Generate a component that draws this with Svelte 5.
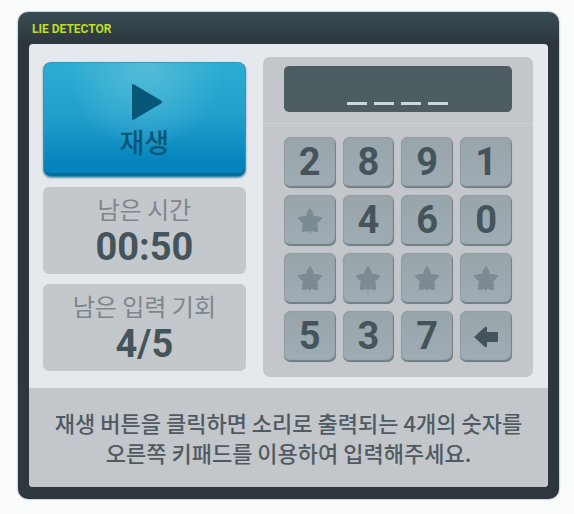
<script lang="ts">
	const CODE_LENGTH = 4;

	const keys = ['2', '8', '9', '1', '*', '4', '6', '0', '*', '*', '*', '*', '5', '3', '7', 'back'];

	let entered = $state<string[]>([]);

	const slots = $derived(Array.from({ length: CODE_LENGTH }, (_, i) => entered[i] ?? ''));

	const press = (key: string) => {
		if (key === 'back') {
			entered = entered.slice(0, -1);
			return;
		}

		if (entered.length < CODE_LENGTH) entered = [...entered, key];
	};
</script>

<main class="detector">
	<h1>LIE DETECTOR</h1>

	<div class="body">
		<div class="content">
			<div class="side">
				<button class="play" type="button">
					<svg viewBox="-6 0 38 38" width="38" height="38" aria-hidden="true">
						<path d="M1 2.6Q1 .3 3 1.5L30 17.4Q32 19 30 20.6L3 36.5Q1 37.700 1 35.4Z" />
					</svg>
					<span>재생</span>
				</button>

				<section class="info">
					<h2>남은 시간</h2>
					<p>00:50</p>
				</section>

				<section class="info">
					<h2>남은 입력 기회</h2>
					<p>4/5</p>
				</section>
			</div>

			<div class="pad">
				<div class="screen">
					<output aria-label="입력">
						{#each slots as digit}
							<span class="slot">{digit}</span>
						{/each}
					</output>
				</div>

				<div class="keys">
					{#each keys as key}
						{#if key === '*'}
							<button class="key" type="button" disabled aria-label="빈 버튼">
								<svg viewBox="0 0 26 26" width="26" height="26" aria-hidden="true">
									<path
										d="M13 0Q16 3 17 8Q21 7.500 25.500 9.500Q23 13.500 20 15.500Q21.500 19 21 24Q17 24 14 22.800L13.500 25H12.500L12 22.800Q9 24 5 24Q4.500 19 6 15.500Q3 13.500 .5 9.500Q5 7.500 9 8Q10 3 13 0Z"
									/>
								</svg>
							</button>
						{:else if key === 'back'}
							<button class="key" type="button" aria-label="지우기" onclick={() => press(key)}>
								<svg viewBox="0 0 26 24" width="26" height="24" aria-hidden="true">
									<path d="M1 12L12 2Q14 1 14 3V7H24Q25 7 25 8V16Q25 17 24 17H14V21Q14 23 12 22Z" />
								</svg>
							</button>
						{:else}
							<button class="key" type="button" onclick={() => press(key)}>{key}</button>
						{/if}
					{/each}
				</div>
			</div>
		</div>

		<p class="guide">
			재생 버튼을 클릭하면 소리로 출력되는 4개의 숫자를<br />
			오른쪽 키패드를 이용하여 입력해주세요.
		</p>
	</div>
</main>

<style>
	:global(body) {
		background: #fafcfc;
	}

	.detector {
		box-sizing: border-box;
		margin: 12px 15px 12px 18px;
		padding: 0 11px 12px;
		border-radius: 10px;
		background: linear-gradient(#384b53, #2d363d 32px, #2d373c);
		box-shadow: 0 0 2px #6d787c;
		color: #45545b;
		font-family: 'Noto Sans CJK KR', sans-serif;
	}

	h1,
	h2,
	p {
		margin: 0;
	}

	h1 {
		padding: 9px 3px 7px;
		color: #c1dc2b;
		font: 700 12px/16px Roboto, sans-serif;
	}

	.body {
		overflow: hidden;
		border-radius: 4px;
		background: #e5e8ec;
	}

	.content {
		display: grid;
		grid-template-columns: 3fr 4fr;
		gap: 17px;
		padding: 13px 15px 11px 14px;
	}

	.side {
		display: flex;
		flex-direction: column;
		gap: 10px;
		padding-top: 5px;
	}

	button {
		border: 0;
		font-family: inherit;
		cursor: pointer;
	}

	.play {
		display: flex;
		flex-direction: column;
		align-items: center;
		gap: 5px;
		height: 115px;
		padding: 21px 0 0;
		border-radius: 8px;
		background:
			radial-gradient(ellipse at 50% 0, #55bcd8, transparent 55%),
			linear-gradient(#2badd3, #22a0cc 45%, #0683bb 88%);
		box-shadow:
			inset 0 0 1px 1px #3997b6,
			inset 0 -4px 1px #086a94,
			0 1px 2px #748e9b;
		color: #075878;
		font-size: 27px;
		font-weight: 500;
		line-height: 32px;
	}

	svg {
		display: block;
		fill: currentColor;
	}

	.info {
		height: 87px;
		border-radius: 6px;
		background: #c3c8cd;
		text-align: center;
	}

	.info h2 {
		padding-top: 6px;
		color: #7e868b;
		font-size: 24px;
		font-weight: 400;
		line-height: 32px;
	}

	.info p {
		font: 700 38px/44px Roboto, sans-serif;
	}

	.pad {
		border-radius: 7px;
		background: #c3c7cc;
	}

	.screen {
		padding: 9px 21px 11px;
		border-bottom: 1px solid #cdd1d5;
	}

	output {
		display: flex;
		justify-content: center;
		gap: 7px;
		box-sizing: border-box;
		height: 46px;
		padding: 7px 0;
		border-radius: 5px;
		background: #4d5c61;
		color: #c9d8dc;
	}

	.slot {
		width: 20px;
		border-bottom: 3px solid #c9d8dc;
		font: 700 24px/28px Roboto, sans-serif;
		text-align: center;
	}

	.keys {
		display: grid;
		grid-template-columns: repeat(4, 1fr);
		gap: 7px;
		padding: 13px 21px 15px;
	}

	.key {
		display: grid;
		place-items: center;
		height: 51px;
		padding: 0;
		border-radius: 7px;
		background: linear-gradient(#98a5aa, #a0acb4);
		box-shadow:
			inset -1px -2px 1px #717f85,
			inset 1px 1px 1px #929ea2,
			0 0 1px #98a1a6;
		color: #45545b;
		font: 700 38px/51px Roboto, sans-serif;
	}

	.key:disabled {
		color: #7c8a91;
		cursor: default;
	}

	.guide {
		padding: 19px 10px 20px;
		background: #c3c7cc;
		color: #505b61;
		font-size: 22px;
		font-weight: 500;
		line-height: 30px;
		text-align: center;
	}
</style>
